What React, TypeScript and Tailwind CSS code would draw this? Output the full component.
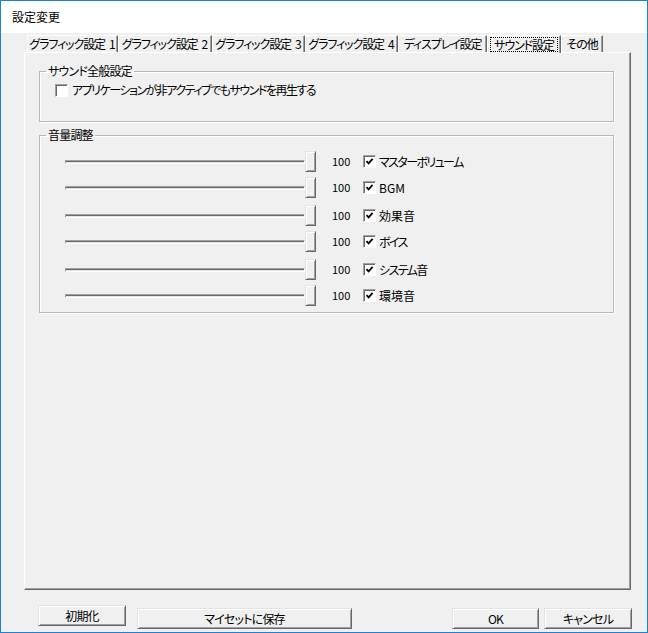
import type { ReactNode } from 'react'

const font = "[font-family:'Noto_Sans_CJK_JP','Noto_Sans',sans-serif] [font-feature-settings:'palt']"

const TABS = [
  { label: 'グラフィック設定', num: '1', w: 91 },
  { label: 'グラフィック設定', num: '2', w: 94 },
  { label: 'グラフィック設定', num: '3', w: 93 },
  { label: 'グラフィック設定', num: '4', w: 93 },
  { label: 'ディスプレイ設定', w: 89 },
  { label: 'サウンド設定', w: 74, active: true },
  { label: 'その他', w: 42 },
]

const VOLUMES = [
  { label: 'マスターボリューム', h: 26, kana: true },
  { label: 'BGM', h: 28 },
  { label: '効果音', h: 26 },
  { label: 'ボイス', h: 28, kana: true },
  { label: 'システム音', h: 26, kana: true },
  { label: '環境音', h: 26 },
]

function Check({ checked }: { checked?: boolean }) {
  return (
    <div className="flex h-[13px] w-[13px] shrink-0 items-center justify-center border border-t-[#a0a0a0] border-l-[#a0a0a0] border-r-white border-b-white bg-white shadow-[inset_1px_1px_0_#696969]">
      {checked && (
        <svg width="9" height="9" viewBox="0 0 9 9">
          <path d="M1.5 4.2 L3.6 6.4 L7.6 1.8" fill="none" stroke="#000" strokeWidth="1.8" />
        </svg>
      )}
    </div>
  )
}

function Group({ title, className, children }: { title: string; className?: string; children: ReactNode }) {
  return (
    <fieldset
      className={`mx-[14px] w-[575px] border border-[#b8b8b8] shadow-[inset_1px_1px_0_#fff,1px_1px_0_#fff] ${className ?? ''}`}
    >
      <legend className="ml-[6px] whitespace-nowrap px-[2px] text-[12px] leading-[14px] tracking-[-0.8px]">{title}</legend>
      {children}
    </fieldset>
  )
}

function Slider() {
  return (
    <div className="flex h-[21px] w-[251px] items-center">
      <div className="h-[4px] flex-1 border border-t-[#a0a0a0] border-l-[#a0a0a0] border-r-white border-b-white bg-[#e3e3e3] shadow-[inset_0_1px_0_#696969]" />
      <div className="h-[21px] w-[11px] border border-t-[#e3e3e3] border-l-[#e3e3e3] border-r-[#696969] border-b-[#696969] bg-[#f0f0f0] shadow-[inset_1px_1px_0_#fff,inset_-1px_-1px_0_#a0a0a0]" />
    </div>
  )
}

function Button({ children, w }: { children: ReactNode; w: string }) {
  return (
    <button
      className={`${w} h-[21px] whitespace-nowrap border border-t-[#e3e3e3] border-l-[#e3e3e3] border-r-[#696969] border-b-[#696969] bg-[#f0f0f0] text-[12px] leading-[17px] tracking-[-0.8px] shadow-[inset_1px_1px_0_#fff,inset_-1px_-1px_0_#a0a0a0]`}
    >
      {children}
    </button>
  )
}

export default function App() {
  return (
    <div className={`flex h-[633px] w-[648px] flex-col border border-[#1883d7] bg-[#f0f0f0] text-black ${font}`}>
      {/* title bar */}
      <div className="flex h-[32px] items-center bg-white pl-[11px] text-[12px]">設定変更</div>

      {/* tabs */}
      <div className="ml-[26px] mt-[2px] flex h-[17px]">
        {TABS.map((t, i) => (
          <div
            key={i}
            style={{ width: t.w }}
            className={`relative z-10 flex items-center justify-center whitespace-nowrap border-t border-l border-r border-t-white border-l-white border-r-[#696969] text-[12px] leading-[14px] tracking-[-1.1px] shadow-[inset_-1px_0_0_#a0a0a0] ${
              t.active ? 'h-[18px] bg-[#f0f0f0]' : 'h-[17px]'
            }`}
          >
            {t.active ? (
              <span className="border border-dotted border-black px-[3px] leading-[13px]">{t.label}</span>
            ) : (
              <>
                {t.label}
                {t.num && <span className="ml-[4px] tracking-normal">{t.num}</span>}
              </>
            )}
          </div>
        ))}
      </div>

      {/* tab panel */}
      <div className="ml-[23px] h-[538px] w-[607px] border border-t-white border-l-white border-r-[#696969] border-b-[#696969] shadow-[inset_-1px_-1px_0_#a0a0a0]">
        <Group title="サウンド全般設定" className="mt-[11px] h-[58px]">
          <div className="mt-[3px] flex items-center gap-[4px] pl-[15px] text-[12px]">
            <Check />
            <span className="whitespace-nowrap tracking-[-1.5px]">アプリケーションが非アクティブでもサウンドを再生する</span>
          </div>
        </Group>

        <Group title="音量調整" className="mt-[6px] h-[185px]">
          <div className="mt-[9px] flex flex-col pl-[25px]">
            {VOLUMES.map((v) => (
              <div key={v.label} style={{ height: v.h }} className="flex items-start">
                <Slider />
                <span className="w-[47px] pl-[16px] pt-[2px] text-[11px] leading-[17px]">100</span>
                <div className="mt-[4px]">
                  <Check checked />
                </div>
                <span
                  className={`ml-[3px] whitespace-nowrap pt-[2px] text-[12px] leading-[17px] ${v.kana ? 'tracking-[-1.6px]' : ''}`}
                >
                  {v.label}
                </span>
              </div>
            ))}
          </div>
        </Group>
      </div>

      {/* bottom buttons */}
      <div className="mt-[15px] flex pl-[37px]">
        <Button w="w-[88px]">初期化</Button>
        <div className="ml-[11px]">
          <Button w="w-[215px]">マイセットに保存</Button>
        </div>
        <div className="ml-[100px]">
          <Button w="w-[87px]">OK</Button>
        </div>
        <div className="ml-[5px]">
          <Button w="w-[88px]">キャンセル</Button>
        </div>
      </div>
    </div>
  )
}
